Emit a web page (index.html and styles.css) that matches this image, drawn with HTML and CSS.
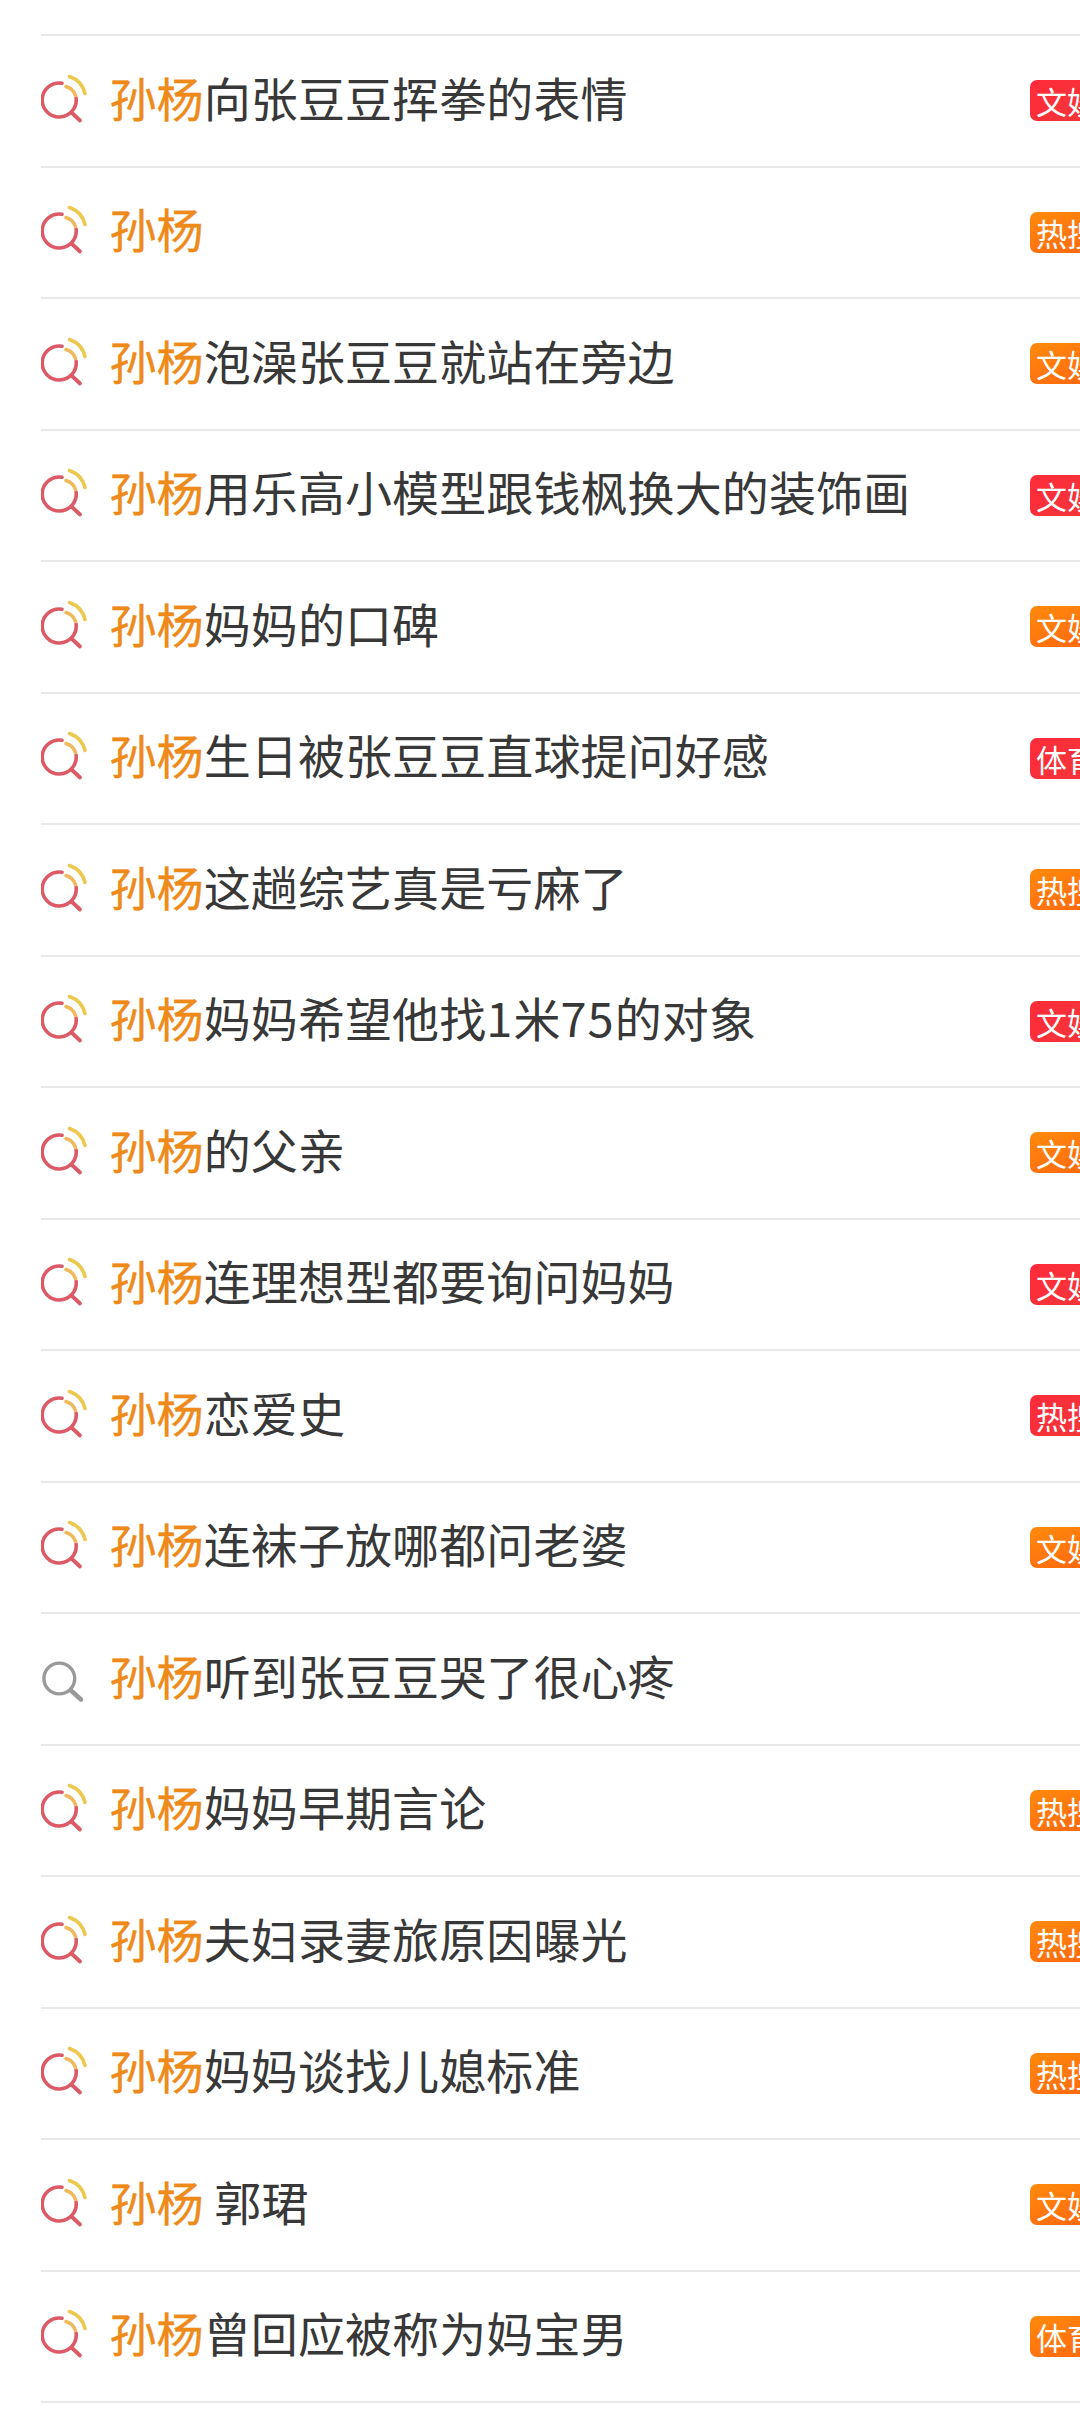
FILE: index.html
```html
<!DOCTYPE html>
<html lang="zh-CN">
<head>
<meta charset="utf-8">
<title>搜索建议</title>
<link rel="stylesheet" href="styles.css">
</head>
<body>
<svg class="defs" width="0" height="0" aria-hidden="true">
  <symbol id="hot" viewBox="9.5 0 50 60">
    <path d="M30.5 12.2A17 17 0 1 0 44.6 27" fill="none" stroke="#dc5a66" stroke-width="3.6" stroke-linecap="round"/>
    <path d="M40.5 42L48.5 49.5" fill="none" stroke="#dc5a66" stroke-width="3.8" stroke-linecap="round"/>
    <path d="M34.5 15.5A14 14 0 0 1 44 24.5" fill="none" stroke="#f0b95c" stroke-width="3.6" stroke-linecap="round"/>
    <path d="M38 5.5A24 24 0 0 1 53.5 22.5" fill="none" stroke="#ecc84e" stroke-width="3.6" stroke-linecap="round"/>
  </symbol>
  <symbol id="plain" viewBox="9.5 0 50 60">
    <circle cx="27.8" cy="29.5" r="15.4" fill="none" stroke="#999" stroke-width="3.4"/>
    <path d="M39.5 41.5L49.5 50.5" fill="none" stroke="#999" stroke-width="4.6" stroke-linecap="round"/>
  </symbol>
</svg>
<ul class="list">
  <li class="row"><svg class="icon"><use href="#hot"/></svg><span class="text"><em>孙杨</em>向张豆豆挥拳的表情</span><span class="tag red">文娱</span></li>
  <li class="row"><svg class="icon"><use href="#hot"/></svg><span class="text"><em>孙杨</em></span><span class="tag orange">热搜</span></li>
  <li class="row"><svg class="icon"><use href="#hot"/></svg><span class="text"><em>孙杨</em>泡澡张豆豆就站在旁边</span><span class="tag orange">文娱</span></li>
  <li class="row"><svg class="icon"><use href="#hot"/></svg><span class="text"><em>孙杨</em>用乐高小模型跟钱枫换大的装饰画</span><span class="tag red">文娱</span></li>
  <li class="row"><svg class="icon"><use href="#hot"/></svg><span class="text"><em>孙杨</em>妈妈的口碑</span><span class="tag orange">文娱</span></li>
  <li class="row"><svg class="icon"><use href="#hot"/></svg><span class="text"><em>孙杨</em>生日被张豆豆直球提问好感</span><span class="tag red">体育</span></li>
  <li class="row"><svg class="icon"><use href="#hot"/></svg><span class="text"><em>孙杨</em>这趟综艺真是亏麻了</span><span class="tag orange">热搜</span></li>
  <li class="row"><svg class="icon"><use href="#hot"/></svg><span class="text"><em>孙杨</em>妈妈希望他找<span class="num">1</span>米<span class="num">75</span>的对象</span><span class="tag red">文娱</span></li>
  <li class="row"><svg class="icon"><use href="#hot"/></svg><span class="text"><em>孙杨</em>的父亲</span><span class="tag orange">文娱</span></li>
  <li class="row"><svg class="icon"><use href="#hot"/></svg><span class="text"><em>孙杨</em>连理想型都要询问妈妈</span><span class="tag red">文娱</span></li>
  <li class="row"><svg class="icon"><use href="#hot"/></svg><span class="text"><em>孙杨</em>恋爱史</span><span class="tag red">热搜</span></li>
  <li class="row"><svg class="icon"><use href="#hot"/></svg><span class="text"><em>孙杨</em>连袜子放哪都问老婆</span><span class="tag orange">文娱</span></li>
  <li class="row"><svg class="icon"><use href="#plain"/></svg><span class="text"><em>孙杨</em>听到张豆豆哭了很心疼</span></li>
  <li class="row"><svg class="icon"><use href="#hot"/></svg><span class="text"><em>孙杨</em>妈妈早期言论</span><span class="tag orange">热搜</span></li>
  <li class="row"><svg class="icon"><use href="#hot"/></svg><span class="text"><em>孙杨</em>夫妇录妻旅原因曝光</span><span class="tag orange">热搜</span></li>
  <li class="row"><svg class="icon"><use href="#hot"/></svg><span class="text"><em>孙杨</em>妈妈谈找儿媳标准</span><span class="tag orange">热搜</span></li>
  <li class="row"><svg class="icon"><use href="#hot"/></svg><span class="text"><em>孙杨</em> 郭珺</span><span class="tag orange">文娱</span></li>
  <li class="row"><svg class="icon"><use href="#hot"/></svg><span class="text"><em>孙杨</em>曾回应被称为妈宝男</span><span class="tag orange">体育</span></li>
</ul>
</body>
</html>
```
FILE: styles.css
```css
* { box-sizing: border-box; }
html, body { margin: 0; padding: 0; background: #fff; }
body {
  width: 1080px;
  height: 2416px;
  overflow: hidden;
  font-family: "Noto Sans CJK SC", "Noto Sans", sans-serif;
}
.defs { display: block; height: 0; }
.list {
  list-style: none;
  margin: 0;
  padding: 34px 0 0 41px;
}
.row {
  display: flex;
  align-items: center;
  height: 131.5px;
  border-top: 2px solid #e9e9e9;
  overflow: hidden;
}
.row:last-child { border-bottom: 2px solid #e9e9e9; height: 133.5px; }
.icon {
  flex: none;
  width: 50px;
  height: 60px;
  margin-right: 18.5px;
}
.text {
  flex: 1;
  min-width: 0;
  font-size: 47px;
  letter-spacing: 0.1px;
  line-height: 60px;
  color: #383838;
  white-space: pre;
  position: relative;
  top: -4px;
}
.text em { font-style: normal; color: #ee8a1a; -webkit-text-stroke: 0.4px #ee8a1a; }
.num { letter-spacing: 1px; }
.tag {
  flex: none;
  width: 80px;
  height: 41px;
  margin-right: -30px;
  padding-left: 6px;
  border-radius: 7px;
  font-size: 31px;
  line-height: 41px;
  color: #fff;
  white-space: nowrap;
}
.red { background: linear-gradient(135deg, #ff2b3a, #f0383a); }
.orange { background: linear-gradient(160deg, #ff8a0c, #ff6410); }
```
